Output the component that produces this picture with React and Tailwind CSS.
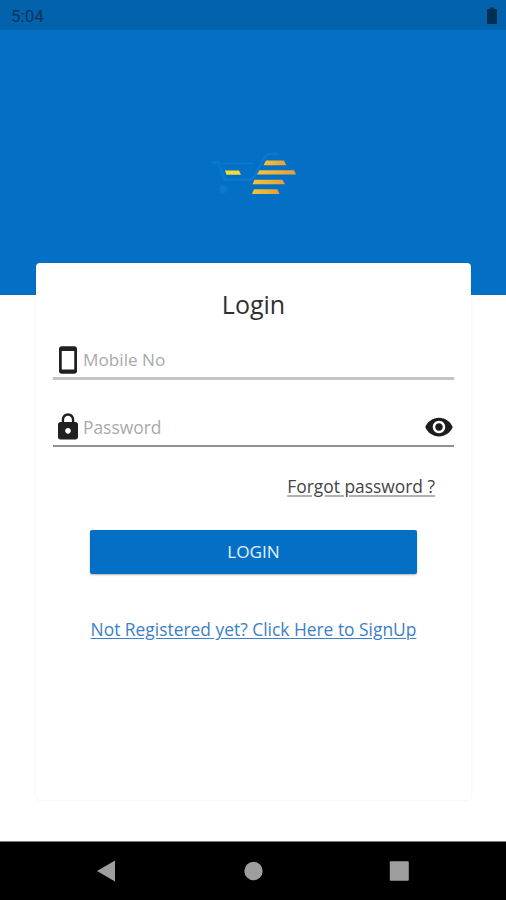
import React from 'react';

function CartLogo() {
  return (
    <svg width="90" height="50" viewBox="0 0 90 50" fill="none">
      <defs>
        <linearGradient id="gold" x1="0" y1="0" x2="1" y2="0">
          <stop offset="0" stopColor="#f5c535" />
          <stop offset="1" stopColor="#dda03f" />
        </linearGradient>
      </defs>
      {/* Cart outline */}
      <path
        d="M4 14.500h6l7 17h24c3 0 5-2 7-6l8-15c1.500-3 3-4.500 6-4.500h9"
        stroke="#0a7ad0"
        strokeWidth="2.500"
      />
      <path d="M11 15.500h34" stroke="#0a7ad0" strokeWidth="1.500" />
      <circle cx="15.500" cy="41" r="4" fill="#0a7ad0" />
      {/* Speed lines */}
      <path d="M58 12.500h18l2.500 4.700h-23z" fill="url(#gold)" />
      <path d="M17 22.500h14l2 4.300h-14.500z" fill="#f0dc35" />
      <path d="M51.500 22.300h34.500l2 4.200h-39z" fill="url(#gold)" />
      <path d="M46.500 31.800h28l2.500 4.500h-32.500z" fill="url(#gold)" />
      <path d="M46 41.300h23.500l2 4.700h-27.500z" fill="url(#gold)" />
    </svg>
  );
}

function PhoneIcon() {
  return (
    <svg width="30" height="30" viewBox="0 0 24 24" fill="#202020">
      <path d="M17 1L7 1c-1.300 0-2.200.9-2.200 2v18c0 1.100.9 2 2.200 2h10c1.300 0 2.200-.9 2.200-2V3c0-1.100-.9-2-2.200-2zM17 19.500H7V4.800h10v14.700z" />
    </svg>
  );
}

function LockIcon() {
  return (
    <svg width="30" height="30" viewBox="0 0 24 24" fill="#202020">
      <path d="M18 8h-1V6c0-2.760-2.240-5-5-5S7 3.240 7 6v2H6c-1.100 0-2 .9-2 2v10c0 1.100.9 2 2 2h12c1.100 0 2-.9 2-2V10c0-1.100-.9-2-2-2zm-6 9.300c-1.270 0-2.300-1.030-2.300-2.300s1.030-2.300 2.300-2.300 2.300 1.030 2.300 2.300-1.030 2.300-2.300 2.300zm3.100-9.300H8.900V6c0-1.710 1.390-3.100 3.100-3.100 1.710 0 3.100 1.390 3.100 3.100v2z" />
    </svg>
  );
}

function EyeIcon() {
  return (
    <svg width="30" height="30" viewBox="0 0 24 24" fill="#1c1c1c">
      <path d="M12 4.500C7 4.500 2.730 7.610 1 12c1.730 4.390 6 7.500 11 7.500s9.270-3.110 11-7.500c-1.730-4.390-6-7.500-11-7.500zM12 17c-2.760 0-5-2.240-5-5s2.240-5 5-5 5 2.240 5 5-2.240 5-5 5zm0-8c-1.660 0-3 1.340-3 3s1.340 3 3 3 3-1.340 3-3-1.340-3-3-3z" />
    </svg>
  );
}

function StatusBar() {
  return (
    <div className="flex h-[30px] items-center justify-between bg-[#0262ac] pl-[11px] pr-[9px]">
      <span className="pt-[2px] font-[Roboto,sans-serif] text-[17px] leading-none text-[#05355d]">5:04</span>
      <svg width="10" height="17" viewBox="0 0 10 17" fill="#042e52">
        <path d="M3 0.500h4V2h2a1 1 0 0 1 1 1v13a1 1 0 0 1-1 1H1a1 1 0 0 1-1-1V3a1 1 0 0 1 1-1h2z" />
      </svg>
    </div>
  );
}

function NavBar() {
  return (
    <nav className="h-[59px] border-t border-[#777] bg-black">
      <svg width="506" height="58" viewBox="0 842 506 58" fill="#9e9e9e">
        <path d="M97 871L115 860.500V881.500z" />
        <circle cx="253.500" cy="871" r="9.200" />
        <rect x="389.800" y="861.300" width="19" height="19.500" rx="1" />
      </svg>
    </nav>
  );
}

export default function App() {
  return (
    <div className="flex h-[900px] w-[506px] flex-col overflow-hidden bg-white font-['Open_Sans',sans-serif]">
      <StatusBar />

      <header className="flex h-[265px] shrink-0 justify-center bg-[#0370c6] pt-[118px]">
        <CartLogo />
      </header>

      <main className="relative ml-9 -mt-8 h-[537px] w-[435px] shrink-0 rounded-[4px] bg-white pl-[17px] pr-[17px] shadow-[0_0_2px_1px_rgba(0,0,0,0.04)]">
        <h1 className="pt-[23px] text-center text-[25px] leading-[36px] text-[#303030]">Login</h1>

        <form>
          <div className="mt-[20px] flex h-[38px] items-center border-b-[3px] border-[#c4c4c4]">
            <PhoneIcon />
            <input
              type="text"
              placeholder="Mobile No"
              className="min-w-0 flex-1 text-[17.200px] outline-none placeholder:text-[#a9a9a9]"
            />
          </div>

          <div className="mt-[28px] flex h-[39px] items-center border-b-2 border-[#8f8f8f] pt-px">
            <LockIcon />
            <input
              type="password"
              placeholder="Password"
              className="min-w-0 flex-1 text-[17.400px] outline-none placeholder:text-[#a9a9a9]"
            />
            <EyeIcon />
          </div>

          <div className="flex justify-end pr-[19px] pt-[26px]">
            <a href="#" className="text-[17.400px] leading-[26px] text-[#454545] underline decoration-[#b0b0b0] decoration-2 underline-offset-2">
              Forgot password ?
            </a>
          </div>

          <button
            type="button"
            className="mx-auto mt-[31px] block h-[44px] w-[327px] rounded-[2px] bg-[#0370c6] text-[17.200px] text-[#e5f1fb] shadow-[0_1px_2px_rgba(0,0,0,0.3)]"
          >
            LOGIN
          </button>
        </form>

        <div className="mt-[42px] text-center">
          <a href="#" className="whitespace-nowrap text-[17.400px] leading-[26px] text-[#3d80c6] underline underline-offset-2">
            Not Registered yet? Click Here to SignUp
          </a>
        </div>
      </main>

      <div className="mt-auto">
        <NavBar />
      </div>
    </div>
  );
}
